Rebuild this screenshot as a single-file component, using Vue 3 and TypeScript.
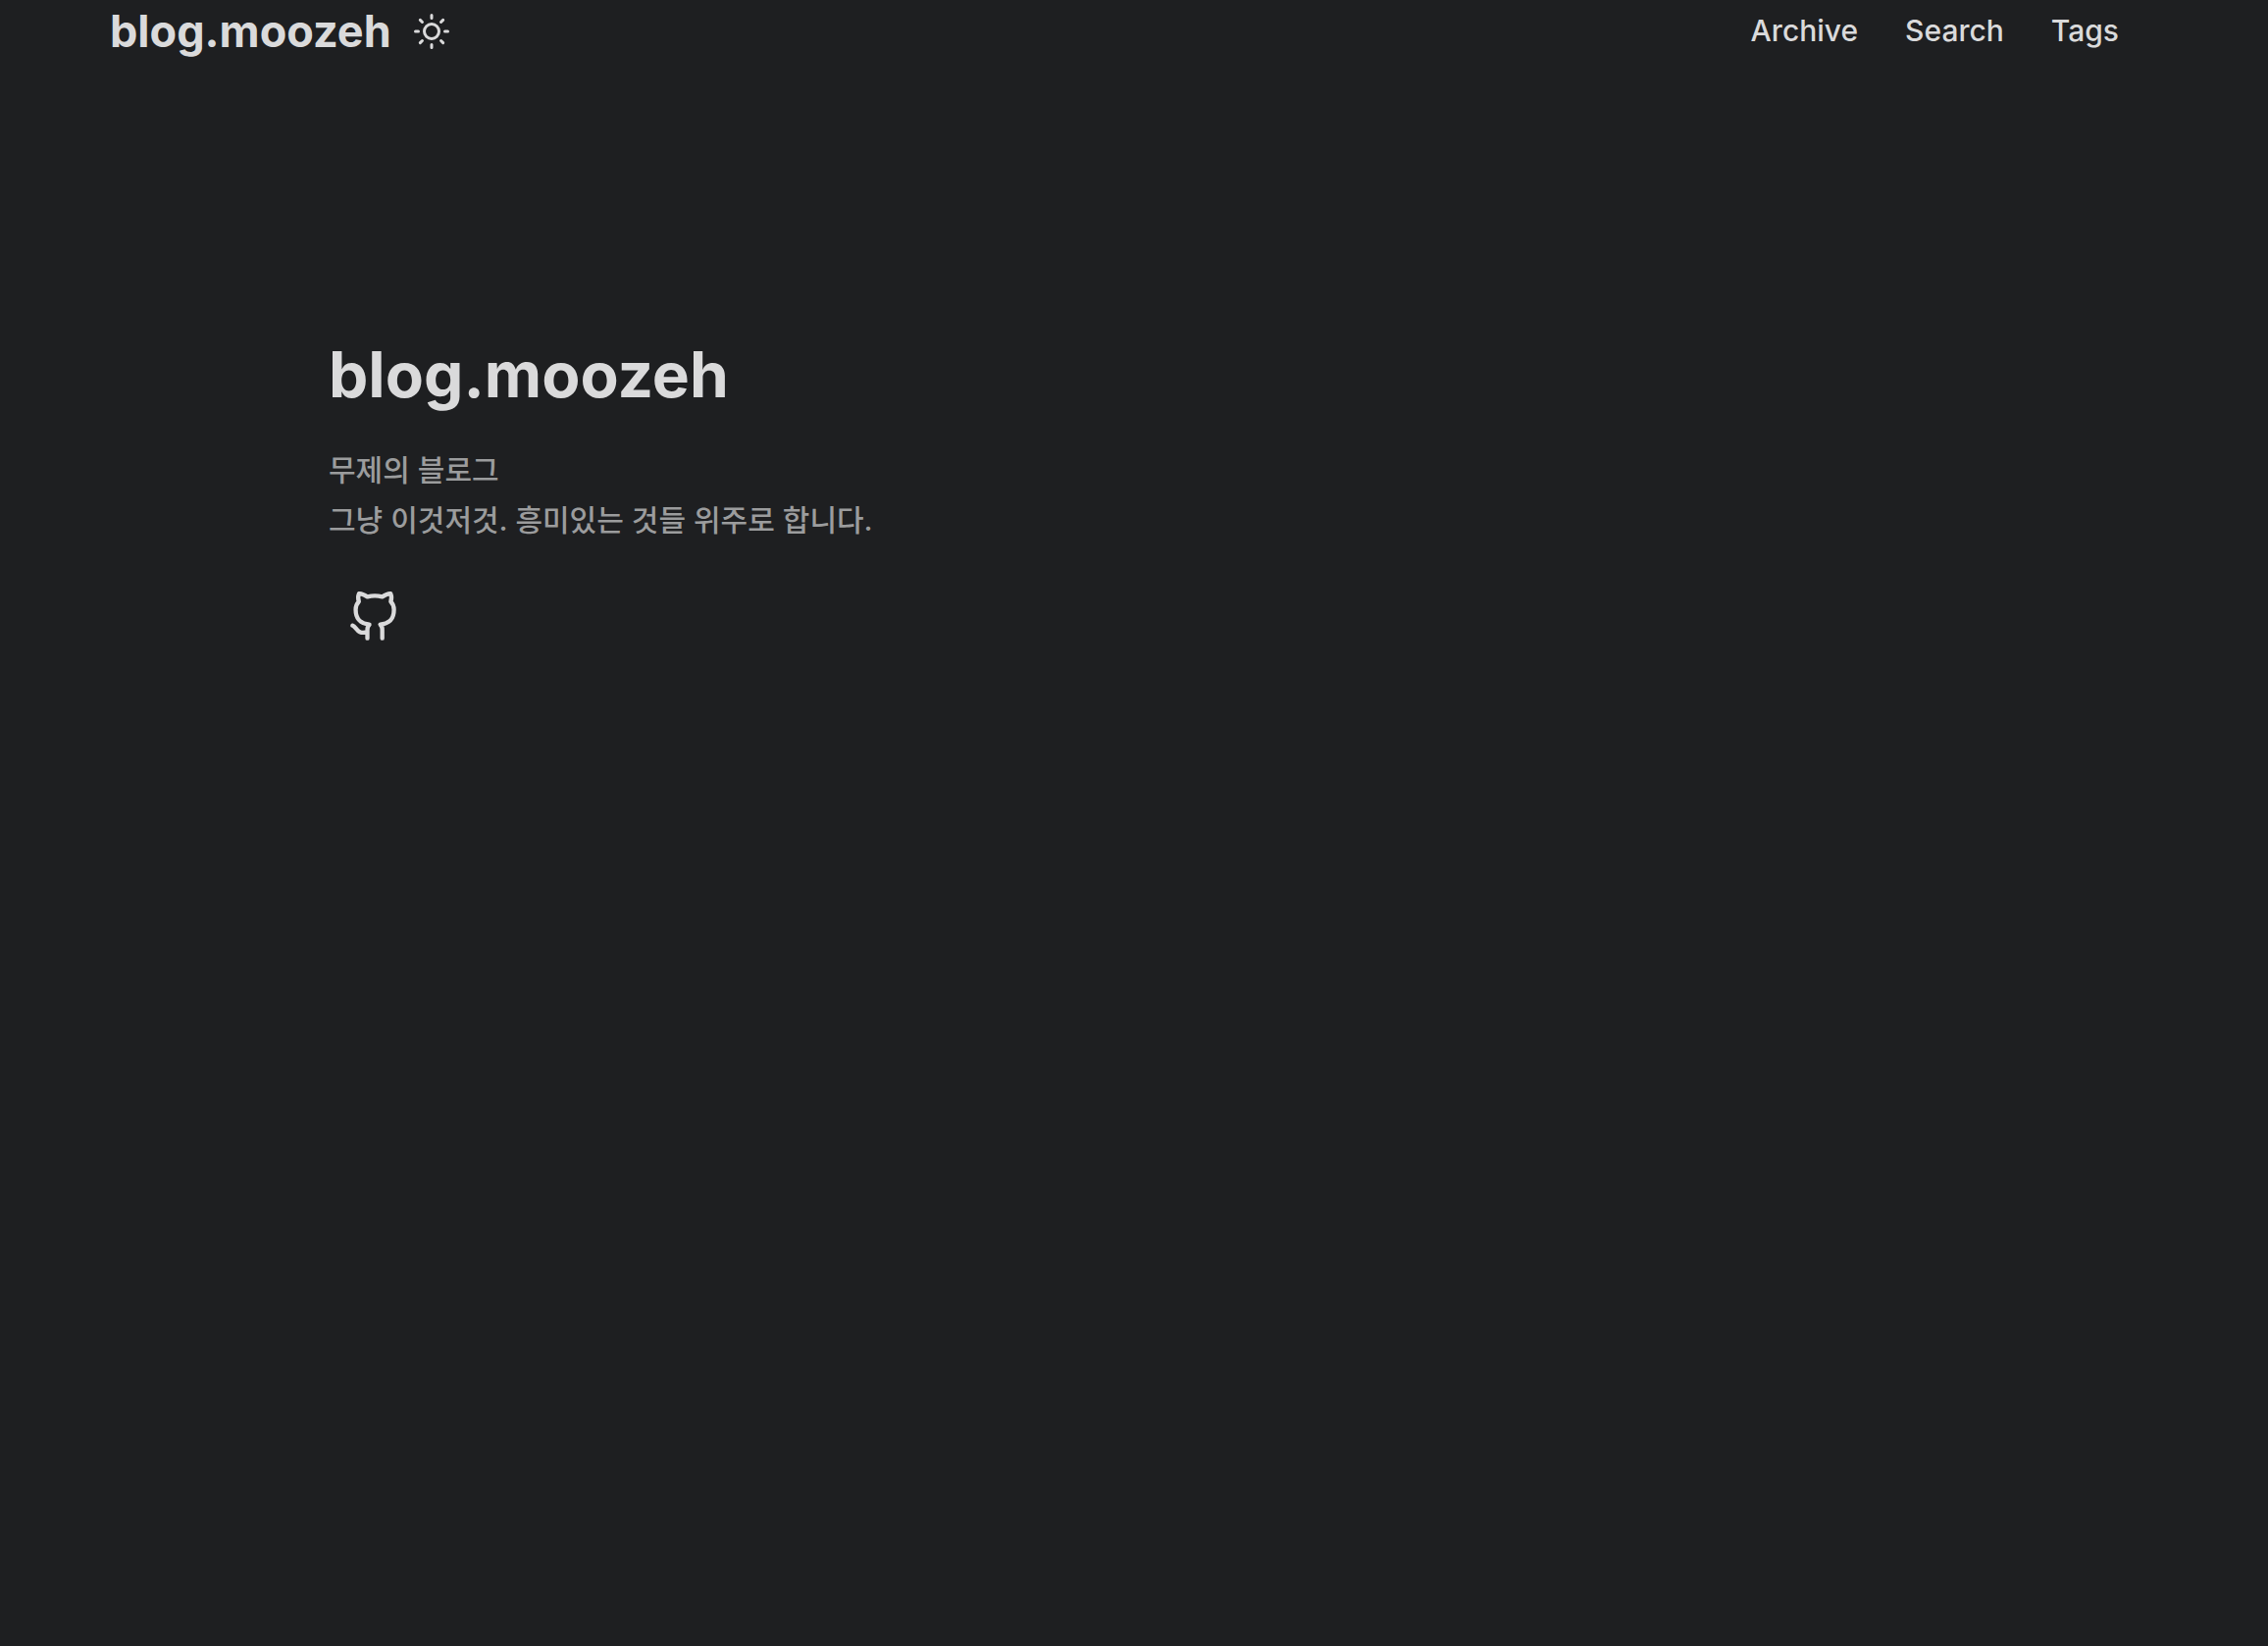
<script setup lang="ts">
interface MenuItem {
  label: string
  href: string
}

const title = 'blog.moozeh'
const menu: MenuItem[] = [
  { label: 'Archive', href: '#archive' },
  { label: 'Search', href: '#search' },
  { label: 'Tags', href: '#tags' },
]
const intro: string[] = ['무제의 블로그', '그냥 이것저것. 흥미있는 것들 위주로 합니다.']
</script>

<template>
  <div class="page">
    <header class="header">
      <div class="brand">
        <a class="logo" href="#home">{{ title }}</a>
        <button class="theme-toggle" type="button" aria-label="Toggle theme">
          <svg viewBox="0 0 24 24" aria-hidden="true">
            <circle cx="12" cy="12" r="5" />
            <path d="M12 1v2M12 21v2M4.22 4.22l1.42 1.42M18.36 18.36l1.42 1.42M1 12h2M21 12h2M4.22 19.78l1.42-1.42M18.36 5.64l1.42-1.42" />
          </svg>
        </button>
      </div>
      <nav class="menu">
        <a v-for="item in menu" :key="item.label" :href="item.href">{{ item.label }}</a>
      </nav>
    </header>

    <main class="main">
      <h1>{{ title }}</h1>
      <div class="intro">
        <p v-for="line in intro" :key="line">{{ line }}</p>
      </div>
      <a class="social" href="#github" aria-label="GitHub">
        <svg viewBox="0 0 24 24" aria-hidden="true">
          <path d="M9 19c-5 1.5-5-2.5-7-3m14 6v-3.87a3.37 3.37 0 0 0-.94-2.61c3.14-.35 6.44-1.54 6.44-7A5.44 5.44 0 0 0 20 4.77 5.07 5.07 0 0 0 19.91 1S18.73.65 16 2.48a13.38 13.38 0 0 0-7 0C6.27.65 5.09 1 5.09 1A5.07 5.07 0 0 0 5 4.77a5.44 5.44 0 0 0-1.5 3.78c0 5.42 3.3 6.61 6.44 7A3.37 3.37 0 0 0 9 18.13V22" />
        </svg>
      </a>
    </main>
  </div>
</template>

<style>
body {
  margin: 0;
  background: #1e1f21;
}
</style>

<style scoped>
.page {
  box-sizing: border-box;
  min-height: 100vh;
  color: #dadadb;
  font-family: Inter, "Noto Sans CJK KR", sans-serif;
}

.header {
  display: flex;
  justify-content: space-between;
  align-items: flex-start;
  height: 64px;
  padding: 0 152px 0 112px;
}

.brand {
  display: flex;
  align-items: center;
  gap: 23px;
}

a {
  color: inherit;
  text-decoration: none;
}

.logo {
  font-size: 45px;
  font-weight: 700;
  line-height: 64px;
}

.theme-toggle {
  display: flex;
  padding: 0;
  border: 0;
  background: none;
  color: inherit;
  cursor: pointer;
}

svg {
  display: block;
  fill: none;
  stroke: currentColor;
  stroke-width: 2;
  stroke-linecap: round;
  stroke-linejoin: round;
  overflow: visible;
}

.theme-toggle svg {
  width: 36px;
  height: 36px;
}

.menu {
  display: flex;
  gap: 48px;
  font-size: 30px;
  font-weight: 500;
  line-height: 62px;
}

.main {
  padding: 274px 335px 0;
}

h1 {
  margin: 0;
  font-size: 64px;
  font-weight: 700;
  line-height: 88px;
}

.intro {
  margin-top: 28px;
  color: #9b9c9d;
  font-size: 30px;
  font-weight: 500;
  line-height: 51px;
}

p {
  margin: 0;
}

.social {
  display: inline-block;
  margin-top: 47px;
  padding: 0 20px;
}

.social svg {
  width: 52px;
  height: 52px;
}
</style>
